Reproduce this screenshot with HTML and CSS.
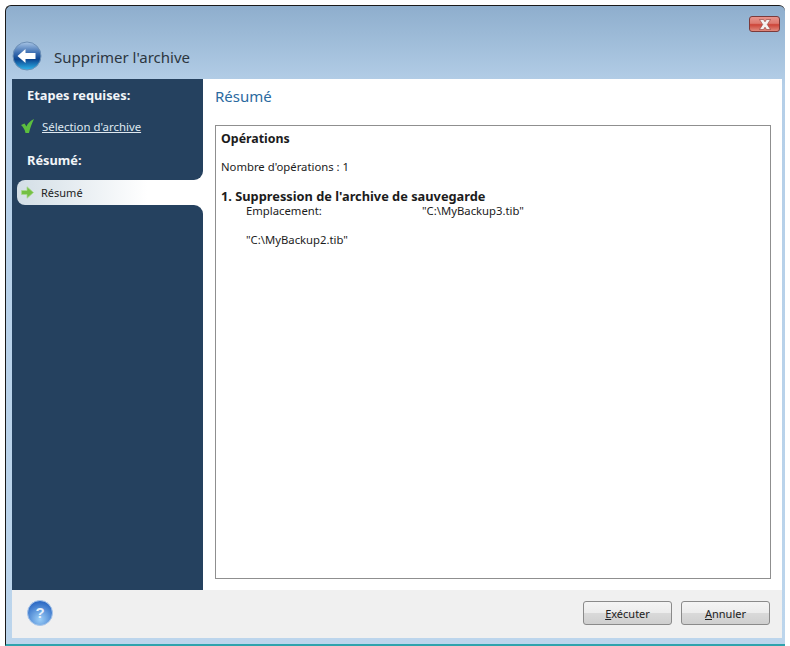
FILE: index.html
```html
<!DOCTYPE html>
<html lang="fr">
<head>
    <meta charset="UTF-8">
    <title>Supprimer l'archive</title>
    <link rel="stylesheet" href="styles.css">
</head>
<body>
    <div class="window">
        <div class="title-bar">
            <button class="close-btn">
                <svg width="14" height="11" viewBox="0 0 14 11"><path d="M1.500 .5h4L7 2.800 8.500 .5h4L9.300 5.500 12.500 10.500h-4L7 8.200 5.500 10.500h-4L4.700 5.500z" fill="#f4f1f0" stroke="#8d3a36" stroke-width=".6"/></svg>
            </button>
        </div>
        <div class="header">
            <svg class="back-icon" width="30" height="30" viewBox="0 0 30 30">
                <defs>
                    <linearGradient id="backFill" x1="0" y1="0" x2="0" y2="1">
                        <stop offset="0" stop-color="#a9c6e6"/>
                        <stop offset=".4" stop-color="#3a6cb0"/>
                        <stop offset=".62" stop-color="#0c4590"/>
                        <stop offset="1" stop-color="#2fb6ec"/>
                    </linearGradient>
                </defs>
                <circle cx="15" cy="15" r="14" fill="url(#backFill)" stroke="#6d90b6"/>
                <path d="M5.500 15l8-7v4h10v6h-10v4z" fill="#fff"/>
            </svg>
            <span class="header-title">Supprimer l'archive</span>
        </div>
        <div class="main">
            <div class="sidebar">
                <div class="steps-top">
                    <div class="step-heading">Etapes requises:</div>
                    <div class="step-row">
                        <svg width="13" height="14" viewBox="0 0 13 14"><path d="M0 6l3.500-1.500 2 3C6.500 4.500 9 2 13 0c-2 4-4 9-5 14H4.500C4 10.500 2 8 0 6z" fill="#5cbf3e"/></svg>
                        <a href="#" class="step-link">Sélection d'archive</a>
                    </div>
                    <div class="step-heading step-heading-2">Résumé:</div>
                </div>
                <div class="tab-row">
                    <div class="tab">
                        <svg width="13" height="13" viewBox="0 0 13 13"><path d="M.5 4.500h5.500V.8l6.500 5.700L6 12.200V8.500H.5z" fill="#74c043" stroke="#a9d88f" stroke-width=".8" stroke-linejoin="round"/></svg>
                        <span>Résumé</span>
                    </div>
                </div>
                <div class="steps-bottom"></div>
            </div>
            <div class="content">
                <h2 class="content-title">Résumé</h2>
                <div class="summary-box">
                    <div class="ops-title">Opérations</div>
                    <div class="ops-count">Nombre d'opérations : 1</div>
                    <div class="op-title">1. Suppression de l'archive de sauvegarde</div>
                    <div class="op-detail">
                        <span class="op-label">Emplacement:</span>
                        <span>"C:\MyBackup3.tib"</span>
                    </div>
                    <div class="op-path">"C:\MyBackup2.tib"</div>
                </div>
            </div>
        </div>
        <div class="footer">
            <svg width="26" height="26" viewBox="0 0 26 26">
                <defs>
                    <radialGradient id="helpFill" cx=".5" cy=".75" r=".7">
                        <stop offset="0" stop-color="#9ccff8"/>
                        <stop offset="1" stop-color="#2c69c4"/>
                    </radialGradient>
                </defs>
                <circle cx="13" cy="13" r="12.500" fill="url(#helpFill)" stroke="#a9c6ea"/>
                <text x="13" y="18" text-anchor="middle" class="help-mark">?</text>
            </svg>
            <div class="footer-buttons">
                <button class="btn"><u>E</u>xécuter</button>
                <button class="btn"><u>A</u>nnuler</button>
            </div>
        </div>
    </div>
</body>
</html>
```

FILE: styles.css
```css
* {
    margin: 0;
    padding: 0;
    box-sizing: border-box;
    font-family: 'Noto Sans', sans-serif;
}

body {
    background-color: #fff;
    height: 646px;
    overflow: hidden;
    padding: 5px 5px 0 5px;
}

.window {
    height: 641px;
    display: flex;
    flex-direction: column;
    padding: 0 3px 6px 6px;
    border-top: 1px solid #1a1a1a;
    border-left: 1px solid #1a1a1a;
    border-bottom: 2px solid #2fa3ad;
    border-radius: 6px 6px 0 0;
    background: linear-gradient(#8eaecd, #b5cfe8 80px, #bcd5ec);
}

.title-bar {
    height: 26px;
    display: flex;
    justify-content: flex-end;
    padding-top: 10px;
    margin-right: 2px;
}

.close-btn {
    width: 31px;
    height: 16px;
    border: 1px solid #7c3a3a;
    border-radius: 3px;
    display: flex;
    align-items: center;
    justify-content: center;
    background: linear-gradient(#e8948c, #dd7a70 45%, #cd4438 55%, #e08a7e);
}

.header {
    height: 47px;
    display: flex;
    align-items: flex-start;
    gap: 12px;
    padding-top: 9px;
}

.header-title {
    font-size: 15px;
    line-height: 20px;
    margin-top: 6px;
    color: #2c3640;
}

.main {
    flex: 1;
    display: flex;
    min-height: 0;
}

.sidebar {
    width: 191px;
    display: flex;
    flex-direction: column;
    background-color: #fff;
}

.steps-top {
    height: 101px;
    background-color: #25415f;
    border-bottom-right-radius: 9px;
    padding: 7px 0 0 15px;
}

.step-heading {
    font-size: 12.800px;
    font-weight: 700;
    line-height: 18px;
    color: #f2f5f8;
}

.step-heading-2 {
    margin-top: 17px;
}

.step-row {
    display: flex;
    align-items: center;
    gap: 8px;
    margin: 14px 0 0 -6px;
    height: 16px;
}

.step-link {
    font-size: 11.400px;
    color: #dfe8f0;
}

.tab-row {
    height: 25px;
    background-color: #25415f;
    padding-left: 5px;
}

.tab {
    height: 25px;
    display: flex;
    align-items: center;
    gap: 7px;
    padding-left: 4px;
    border-radius: 8px 0 0 8px;
    background: linear-gradient(90deg, #d3dee6, #fff 70%);
    font-size: 11px;
    color: #222;
}

.steps-bottom {
    flex: 1;
    background-color: #25415f;
    border-top-right-radius: 9px;
}

.content {
    flex: 1;
    display: flex;
    flex-direction: column;
    background-color: #fff;
    padding: 6px 11px 11px 12px;
}

.content-title {
    font-size: 15px;
    font-weight: 400;
    line-height: 22px;
    color: #2b6a9f;
    margin-bottom: 18px;
}

.summary-box {
    flex: 1;
    border: 1px solid #8f8f8f;
    padding: 5px 5px;
    font-size: 11.300px;
    color: #1c1c1c;
}

.ops-title {
    font-size: 12.400px;
    font-weight: 700;
    line-height: 16px;
}

.ops-count {
    margin-top: 12px;
    line-height: 16px;
}

.op-title {
    margin-top: 14px;
    font-size: 12.800px;
    font-weight: 700;
    line-height: 15px;
}

.op-detail {
    display: flex;
    padding-left: 25px;
    line-height: 13px;
}

.op-label {
    width: 176px;
}

.op-path {
    padding-left: 25px;
    margin-top: 16px;
    line-height: 13px;
}

.footer {
    height: 48px;
    display: flex;
    align-items: center;
    justify-content: space-between;
    padding: 0 12px 2px 15px;
    background-color: #f0f0f0;
}

.help-mark {
    font-family: 'Liberation Sans', sans-serif;
    font-size: 15px;
    font-weight: 700;
    fill: #e6f1fb;
}

.footer-buttons {
    display: flex;
    gap: 9px;
}

.btn {
    width: 89px;
    height: 24px;
    border: 1px solid #8a8a8a;
    border-radius: 3px;
    background: linear-gradient(#f4f4f4, #ececec 48%, #d9d9d9 52%, #cfcfcf);
    font-size: 11px;
    color: #222;
}
```
